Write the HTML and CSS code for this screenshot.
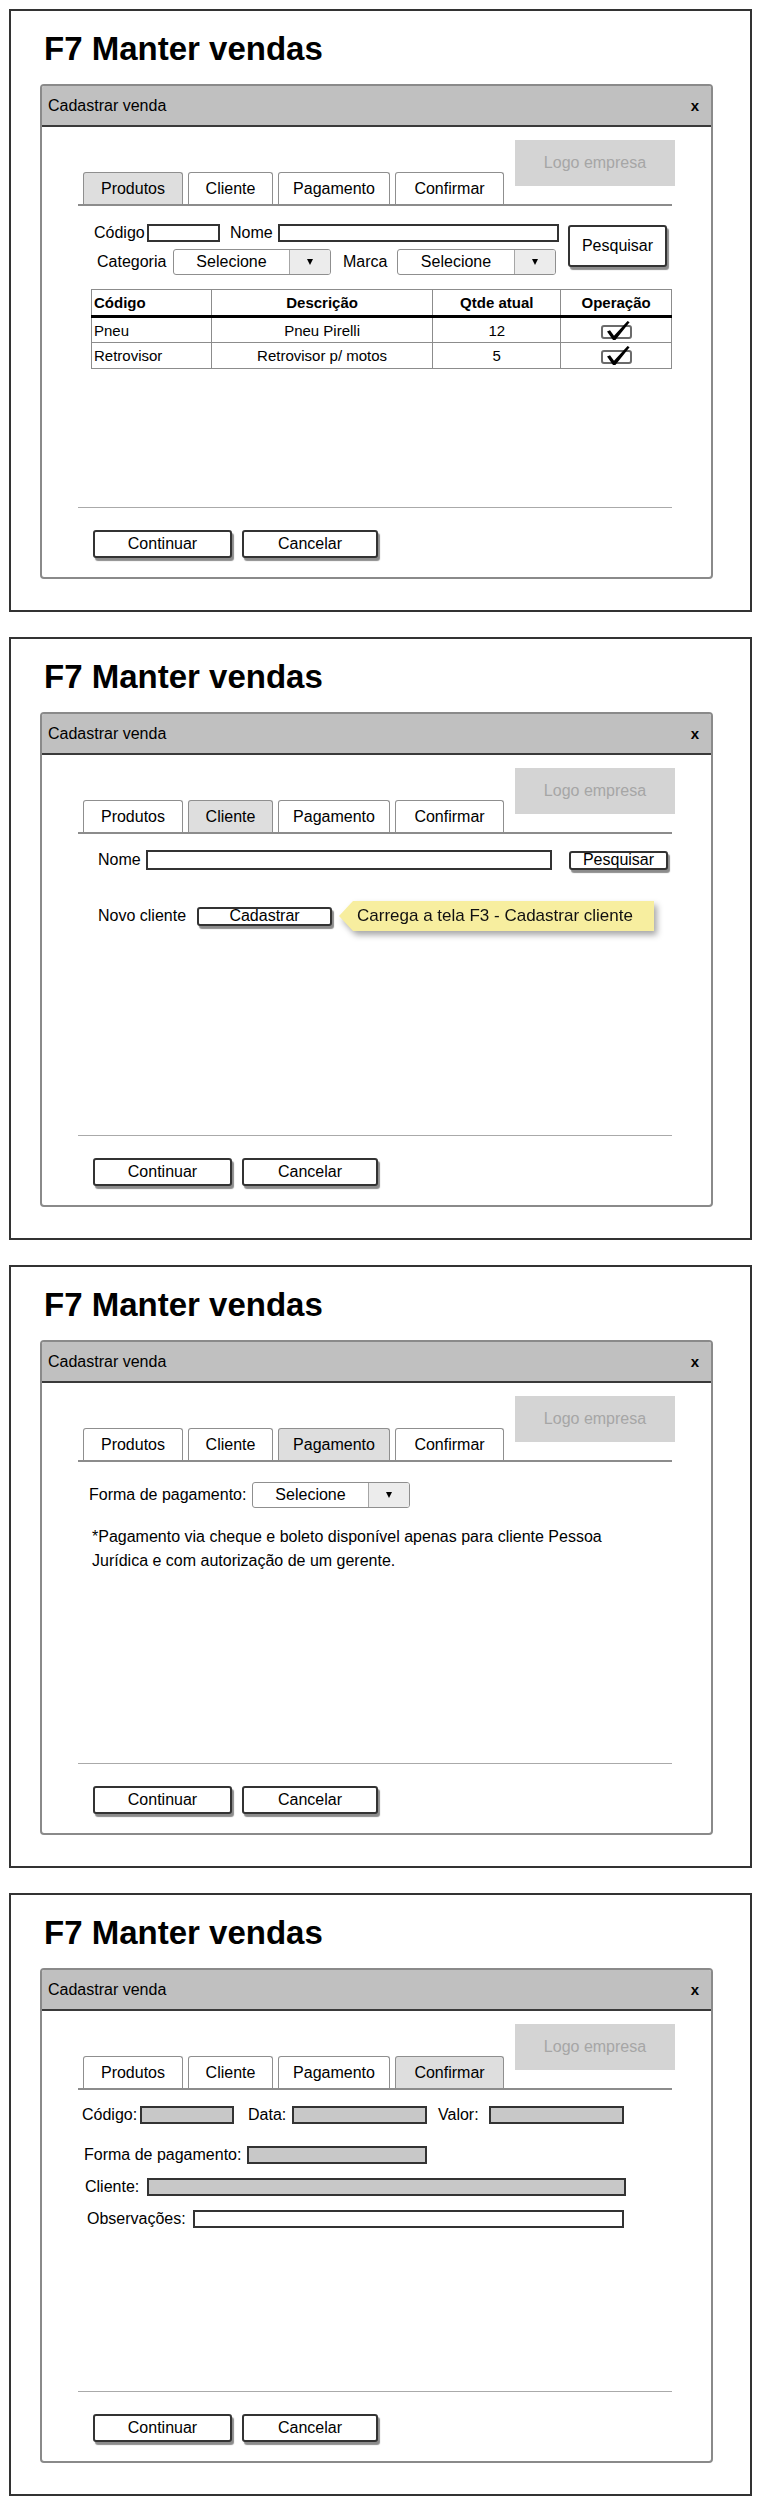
FILE: index.html
```html
<!DOCTYPE html>
<html lang="pt-BR">
<head>
<meta charset="utf-8">
<title>F7 Manter vendas</title>
<link rel="stylesheet" href="styles.css">
</head>
<body>

<!-- Tela 1: Produtos -->
<section class="frame">
  <h1 class="title">F7 Manter vendas</h1>
  <div class="dialog">
    <div class="dlg-head"><span>Cadastrar venda</span><span class="dlg-close">x</span></div>
    <div class="dlg-body">
      <div class="tabbar">
        <div class="tabs">
          <div class="tab tab-produtos active">Produtos</div>
          <div class="tab tab-cliente">Cliente</div>
          <div class="tab tab-pagamento">Pagamento</div>
          <div class="tab tab-confirmar">Confirmar</div>
        </div>
        <div class="logo">Logo empresa</div>
      </div>

      <div class="search">
        <div class="fields">
          <div class="frow">
            <span class="lbl w-codigo">Código</span>
            <div class="input w-in-codigo"></div>
            <span class="lbl w-nome">Nome</span>
            <div class="input w-in-nome"></div>
          </div>
          <div class="frow frow-sel">
            <span class="lbl w-categoria">Categoria</span>
            <div class="select w-sel-cat"><span class="sel-text">Selecione</span><span class="sel-btn"><i class="caret"></i></span></div>
            <span class="lbl w-marca">Marca</span>
            <div class="select w-sel-marca"><span class="sel-text">Selecione</span><span class="sel-btn"><i class="caret"></i></span></div>
          </div>
        </div>
        <button class="btn btn-pesq-big">Pesquisar</button>
      </div>

      <table class="grid">
        <thead>
          <tr>
            <th class="c1 left">Código</th>
            <th class="c2">Descrição</th>
            <th class="c3">Qtde atual</th>
            <th class="c4">Operação</th>
          </tr>
        </thead>
        <tbody>
          <tr>
            <td class="left">Pneu</td>
            <td>Pneu Pirelli</td>
            <td>12</td>
            <td class="op"><svg class="chk" width="33" height="21" viewBox="0 0 33 21"><rect x="2" y="6" width="29" height="12" rx="2" fill="#fff" stroke="#6b6b6b" stroke-width="2"/><path d="M7 11.5 L10 10.3 L14 15.8 L27.6 1 L29.6 2.2 L15.4 20 L13 20 Z" fill="#000"/></svg></td>
          </tr>
          <tr>
            <td class="left">Retrovisor</td>
            <td>Retrovisor p/ motos</td>
            <td>5</td>
            <td class="op"><svg class="chk" width="33" height="21" viewBox="0 0 33 21"><rect x="2" y="6" width="29" height="12" rx="2" fill="#fff" stroke="#6b6b6b" stroke-width="2"/><path d="M7 11.5 L10 10.3 L14 15.8 L27.6 1 L29.6 2.2 L15.4 20 L13 20 Z" fill="#000"/></svg></td>
          </tr>
        </tbody>
      </table>
    </div>
    <div class="dlg-foot">
      <button class="btn btn-cont">Continuar</button>
      <button class="btn btn-canc">Cancelar</button>
    </div>
  </div>
</section>

<!-- Tela 2: Cliente -->
<section class="frame">
  <h1 class="title">F7 Manter vendas</h1>
  <div class="dialog">
    <div class="dlg-head"><span>Cadastrar venda</span><span class="dlg-close">x</span></div>
    <div class="dlg-body">
      <div class="tabbar">
        <div class="tabs">
          <div class="tab tab-produtos">Produtos</div>
          <div class="tab tab-cliente active">Cliente</div>
          <div class="tab tab-pagamento">Pagamento</div>
          <div class="tab tab-confirmar">Confirmar</div>
        </div>
        <div class="logo">Logo empresa</div>
      </div>

      <div class="row-nome">
        <span class="lbl w-nome2">Nome</span>
        <div class="input w-in-nome2"></div>
        <button class="btn btn-pesq-small">Pesquisar</button>
      </div>

      <div class="row-novo">
        <span class="lbl w-novo">Novo cliente</span>
        <button class="btn btn-cadastrar">Cadastrar</button>
        <div class="tip">
          <span class="tip-arrow"></span>
          <span class="tip-body">Carrega a tela F3 - Cadastrar cliente</span>
        </div>
      </div>
    </div>
    <div class="dlg-foot">
      <button class="btn btn-cont">Continuar</button>
      <button class="btn btn-canc">Cancelar</button>
    </div>
  </div>
</section>

<!-- Tela 3: Pagamento -->
<section class="frame">
  <h1 class="title">F7 Manter vendas</h1>
  <div class="dialog">
    <div class="dlg-head"><span>Cadastrar venda</span><span class="dlg-close">x</span></div>
    <div class="dlg-body">
      <div class="tabbar">
        <div class="tabs">
          <div class="tab tab-produtos">Produtos</div>
          <div class="tab tab-cliente">Cliente</div>
          <div class="tab tab-pagamento active">Pagamento</div>
          <div class="tab tab-confirmar">Confirmar</div>
        </div>
        <div class="logo">Logo empresa</div>
      </div>

      <div class="row-forma">
        <span class="lbl w-forma">Forma de pagamento:</span>
        <div class="select w-sel-forma"><span class="sel-text">Selecione</span><span class="sel-btn"><i class="caret"></i></span></div>
      </div>
      <p class="note">*Pagamento via cheque e boleto disponível apenas para cliente Pessoa<br>Jurídica e com autorização de um gerente.</p>
    </div>
    <div class="dlg-foot">
      <button class="btn btn-cont">Continuar</button>
      <button class="btn btn-canc">Cancelar</button>
    </div>
  </div>
</section>

<!-- Tela 4: Confirmar -->
<section class="frame">
  <h1 class="title">F7 Manter vendas</h1>
  <div class="dialog">
    <div class="dlg-head"><span>Cadastrar venda</span><span class="dlg-close">x</span></div>
    <div class="dlg-body">
      <div class="tabbar">
        <div class="tabs">
          <div class="tab tab-produtos">Produtos</div>
          <div class="tab tab-cliente">Cliente</div>
          <div class="tab tab-pagamento">Pagamento</div>
          <div class="tab tab-confirmar active">Confirmar</div>
        </div>
        <div class="logo">Logo empresa</div>
      </div>

      <div class="confirm">
        <div class="crow">
          <span class="lbl w-c-codigo">Código:</span>
          <div class="input ro w-c-in-codigo"></div>
          <span class="lbl w-c-data">Data:</span>
          <div class="input ro w-c-in-data"></div>
          <span class="lbl w-c-valor">Valor:</span>
          <div class="input ro w-c-in-valor"></div>
        </div>
        <div class="crow crow-2">
          <span class="lbl w-c-forma">Forma de pagamento:</span>
          <div class="input ro w-c-in-forma"></div>
        </div>
        <div class="crow crow-3">
          <span class="lbl w-c-cliente">Cliente:</span>
          <div class="input ro w-c-in-cliente"></div>
        </div>
        <div class="crow crow-4">
          <span class="lbl w-c-obs">Observações:</span>
          <div class="input w-c-in-obs"></div>
        </div>
      </div>
    </div>
    <div class="dlg-foot">
      <button class="btn btn-cont">Continuar</button>
      <button class="btn btn-canc">Cancelar</button>
    </div>
  </div>
</section>

</body>
</html>
```

FILE: styles.css
```css
* { box-sizing: border-box; }

body {
  margin: 0;
  padding: 9px 0 0;
  font-family: "Liberation Sans", Arial, sans-serif;
  font-size: 16px;
  color: #000;
  background: #fff;
}

/* ---------- frame ---------- */
.frame {
  width: 743px;
  height: 603px;
  margin: 0 0 25px 9px;
  border: 2px solid #333;
  padding: 18px 0 0 29px;
}

.title {
  margin: 0 0 15px 4px;
  font-size: 33px;
  line-height: 40px;
  font-weight: bold;
}

/* ---------- dialog ---------- */
.dialog {
  width: 673px;
  height: 495px;
  border: 2px solid #8a8a8a;
  border-radius: 4px;
  display: flex;
  flex-direction: column;
  overflow: hidden;
  background: #fff;
}

.dlg-head {
  flex: none;
  height: 41px;
  background: #c0c0c0;
  border-bottom: 2px solid #3a3a3a;
  display: flex;
  align-items: center;
  justify-content: space-between;
  padding: 0 12px 0 6px;
}

.dlg-close {
  font-weight: bold;
  font-size: 15px;
}

.dlg-body {
  flex: 1;
  padding: 13px 39px 0 36px;
}

.dlg-foot {
  flex: none;
  margin: 0 39px 0 36px;
  border-top: 1px solid #aaa;
  padding: 22px 0 19px 15px;
  display: flex;
  gap: 10px;
}

/* ---------- tabs ---------- */
.tabbar {
  height: 66px;
  display: flex;
  align-items: flex-end;
  border-bottom: 2px solid #8c8c8c;
}

.tabs {
  display: flex;
  gap: 5px;
  margin-left: 5px;
}

.tab {
  height: 32px;
  border: 1px solid #8f8f8f;
  border-bottom: none;
  border-radius: 3px 3px 0 0;
  display: flex;
  align-items: center;
  justify-content: center;
  background: #fff;
}

.tab.active { background: #dedede; }

.tab-produtos { width: 100px; }
.tab-cliente { width: 85px; }
.tab-pagamento { width: 112px; }
.tab-confirmar { width: 109px; }

.logo {
  align-self: flex-start;
  margin-left: auto;
  margin-right: -3px;
  width: 160px;
  height: 46px;
  background: #d4d4d4;
  color: #a6a6a6;
  display: flex;
  align-items: center;
  justify-content: center;
}

/* ---------- common controls ---------- */
.lbl {
  flex: none;
  white-space: nowrap;
}

.input {
  flex: none;
  height: 18px;
  border: 2px solid #333;
  background: #fff;
}

.input.ro { background: #c8c8c8; }

.select {
  flex: none;
  display: flex;
  height: 26px;
  border: 1.5px solid #8f8f8f;
  border-radius: 3px;
  overflow: hidden;
  background: #fff;
}

.sel-text {
  flex: 1;
  display: flex;
  align-items: center;
  justify-content: center;
}

.sel-btn {
  width: 41px;
  background: #ececec;
  border-left: 1px solid #a6a6a6;
  display: flex;
  align-items: center;
  justify-content: center;
}

.caret {
  width: 0;
  height: 0;
  border-left: 3px solid transparent;
  border-right: 3px solid transparent;
  border-top: 6px solid #000;
}

.btn {
  flex: none;
  font: inherit;
  color: #000;
  padding: 0;
  border: 2px solid #333;
  border-radius: 3px;
  background: #fff;
  box-shadow: 2px 3px 1px rgba(0, 0, 0, 0.45);
  display: flex;
  align-items: center;
  justify-content: center;
  line-height: 1;
}

.btn-cont { width: 139px; height: 28px; }
.btn-canc { width: 136px; height: 28px; }

/* ---------- tela 1 ---------- */
.search {
  display: flex;
  align-items: flex-start;
  margin-top: 18px;
}

.fields {
  margin-left: 16px;
  display: flex;
  flex-direction: column;
  gap: 7px;
}

.frow {
  display: flex;
  align-items: center;
  height: 18px;
}

.frow-sel {
  height: 26px;
  padding-left: 3px;
}

.w-codigo { width: 53px; }
.w-in-codigo { width: 73px; }
.w-nome { width: 48px; margin-left: 10px; }
.w-in-nome { width: 281px; }
.w-categoria { width: 76px; }
.w-sel-cat { width: 158px; }
.w-marca { width: 54px; margin-left: 12px; }
.w-sel-marca { width: 159px; }

.btn-pesq-big {
  width: 99px;
  height: 42px;
  margin: 1px 0 0 9px;
}

.grid {
  margin: 14px 0 0 13px;
  width: 581px;
  border-collapse: collapse;
  font-size: 15px;
}

.grid th,
.grid td {
  border: 1px solid #8c8c8c;
  padding: 0 2px;
  height: 26px;
  text-align: center;
  white-space: nowrap;
}

.grid th {
  height: 27px;
  font-weight: bold;
  border-bottom: 3px solid #000;
}

.grid .left { text-align: left; }

.grid .c1 { width: 120px; }
.grid .c2 { width: 222px; }
.grid .c3 { width: 128px; }
.grid .c4 { width: 111px; }

.grid td.op { padding: 0; }

.chk {
  display: block;
  margin: 0 auto;
}

/* ---------- tela 2 ---------- */
.row-nome {
  display: flex;
  align-items: center;
  height: 20px;
  margin: 16px 0 0 20px;
}

.w-nome2 { width: 48px; }
.w-in-nome2 { width: 406px; height: 20px; }

.btn-pesq-small {
  width: 99px;
  height: 19px;
  margin-left: 17px;
}

.row-novo {
  display: flex;
  align-items: center;
  height: 30px;
  margin: 31px 0 0 20px;
}

.w-novo { width: 99px; }

.btn-cadastrar {
  width: 135px;
  height: 19px;
}

.tip {
  display: flex;
  margin-left: 7px;
  height: 30px;
  filter: drop-shadow(3px 4px 3px rgba(0, 0, 0, 0.35));
}

.tip-arrow {
  width: 0;
  height: 0;
  border-top: 15px solid transparent;
  border-bottom: 15px solid transparent;
  border-right: 14px solid #f7ee9f;
}

.tip-body {
  width: 301px;
  height: 30px;
  background: #f7ee9f;
  display: flex;
  align-items: center;
  padding-left: 4px;
  font-size: 17px;
  color: #111;
}

/* ---------- tela 3 ---------- */
.row-forma {
  display: flex;
  align-items: center;
  height: 26px;
  margin: 20px 0 0 11px;
}

.w-forma { width: 163px; }
.w-sel-forma { width: 158px; }

.note {
  margin: 17px 0 0 14px;
  line-height: 24px;
}

/* ---------- tela 4 ---------- */
.confirm {
  margin: 16px 0 0 4px;
}

.crow {
  display: flex;
  align-items: center;
  height: 18px;
}

.crow-2 { margin-top: 22px; padding-left: 2px; }
.crow-3 { margin-top: 14px; padding-left: 3px; }
.crow-4 { margin-top: 14px; padding-left: 5px; }

.w-c-codigo { width: 58px; }
.w-c-in-codigo { width: 94px; }
.w-c-data { width: 44px; margin-left: 14px; }
.w-c-in-data { width: 135px; }
.w-c-valor { width: 51px; margin-left: 11px; }
.w-c-in-valor { width: 135px; }

.w-c-forma { width: 163px; }
.w-c-in-forma { width: 180px; }

.w-c-cliente { width: 62px; }
.w-c-in-cliente { width: 479px; }

.w-c-obs { width: 106px; }
.w-c-in-obs { width: 431px; }
```
